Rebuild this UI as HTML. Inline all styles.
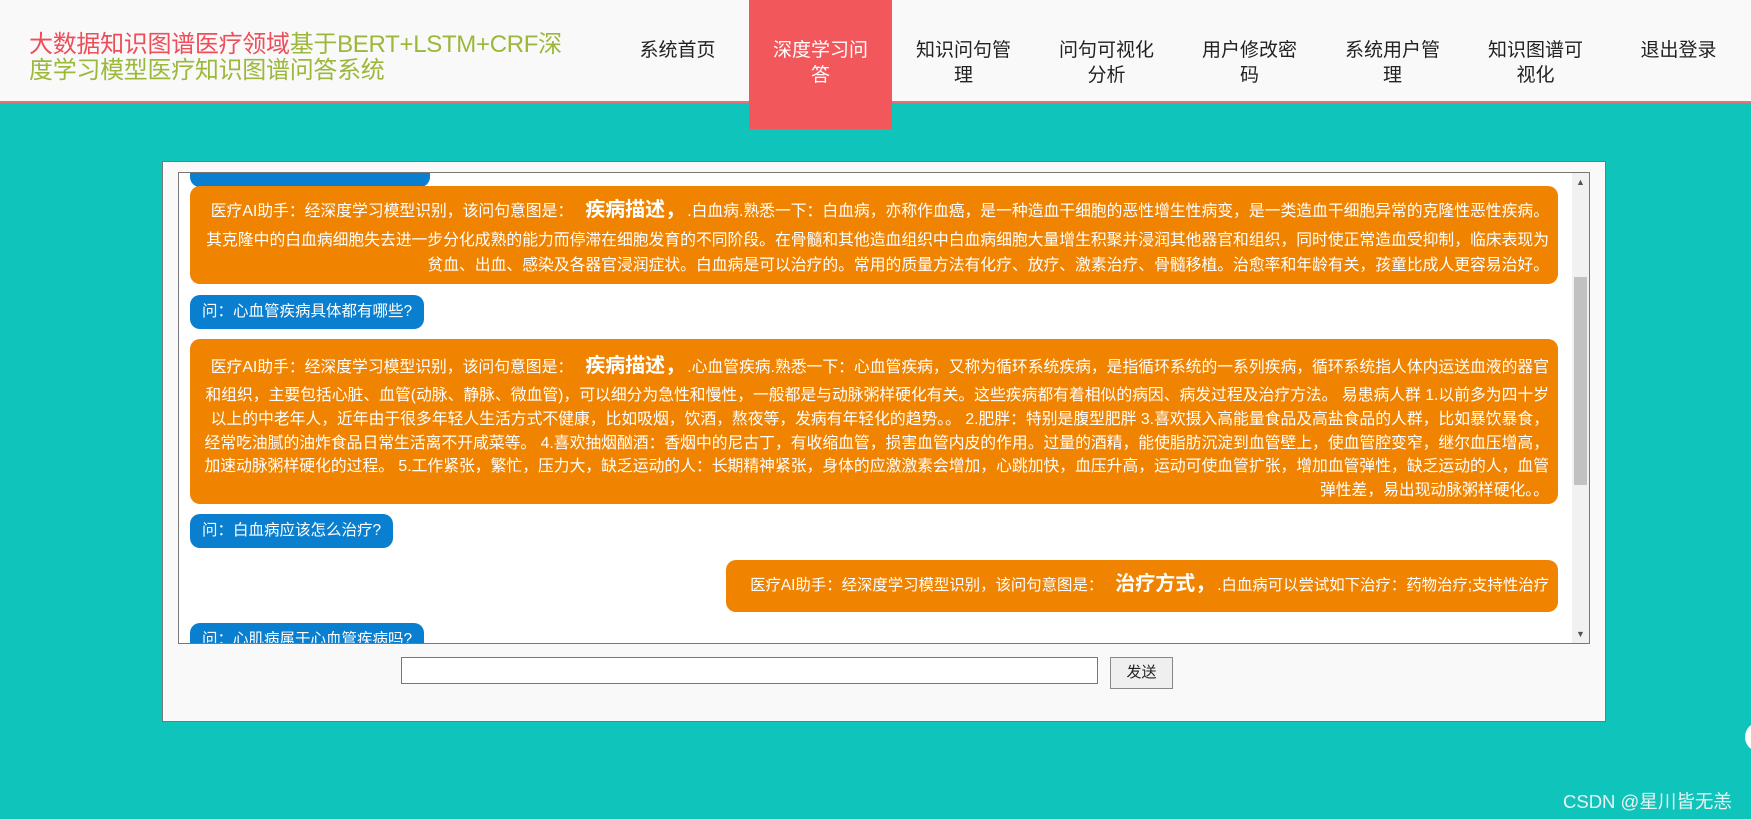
<!DOCTYPE html>
<html><head><meta charset="utf-8">
<style>
*{margin:0;padding:0;box-sizing:border-box}
body{width:1751px;height:819px;overflow:hidden;background:#0fc4bb;font-family:"Liberation Sans","Noto Sans CJK SC",sans-serif;position:relative}
.hdr{position:absolute;left:0;top:0;width:1751px;height:103px;background:#f9f9f9;border-bottom:2px solid #e8707a}
.title{position:absolute;left:29px;top:32px;font-size:24px;line-height:26px;color:#9cb83a;letter-spacing:-0.3px}
.title span{color:#ee4d5a}
.nav{position:absolute;left:606px;top:0;display:flex}
.nav div{width:143px;height:103px;font-size:19px;line-height:25px;color:#222;text-align:center;padding:38px 17px 0}
.nav div.act{background:#f2575b;color:#fff;height:129px}
.box{position:absolute;left:162px;top:161px;width:1444px;height:561px;background:#f9f9f9;border:1px solid #777}
.chat{position:absolute;left:178px;top:172px;width:1412px;height:472px;background:#fff;border:1px solid #777;overflow:hidden}
.sb{position:absolute;right:0;top:0;width:17px;height:100%;background:#f1f1f1}
.th{position:absolute;left:2px;top:104px;width:13px;height:208px;background:#c1c1c1}
.q{position:absolute;left:11px;background:#0a7fcf;color:#fff;font-size:15.5px;line-height:34px;padding:0 12px;border-radius:10px;height:34px}
.a{position:absolute;background:#f08300;color:#fff;font-size:15.8px;text-align:right;border-radius:10px;padding:0 9px;white-space:nowrap}
.a b{font-size:20px;margin:0 2px 0 12px;line-height:36px}
.inp{position:absolute;left:401px;top:657px;width:697px;height:27px;background:#fff;border:1px solid #777}
.btn{position:absolute;left:1110px;top:657px;width:63px;height:32px;background:#efefef;border:1px solid #888;font-size:15px;text-align:center;line-height:30px;color:#222}
.wm{position:absolute;left:1563px;top:788px;font-size:18.5px;color:#e8f4f3}
</style></head><body>
<div class="hdr">
 <div class="title"><span>大数据知识图谱医疗领域</span>基于BERT+LSTM+CRF深<br>度学习模型医疗知识图谱问答系统</div>
 <div class="nav">
  <div>系统首页</div>
  <div class="act">深度学习问答</div>
  <div>知识问句管理</div>
  <div>问句可视化分析</div>
  <div>用户修改密码</div>
  <div>系统用户管理</div>
  <div>知识图谱可视化</div>
  <div>退出登录</div>
 </div>
</div>
<div class="box"></div>
<div class="chat">
 <div class="q" style="top:-20px;width:240px"></div>
 <div class="a" style="left:11px;width:1368px;top:13px;height:98px;line-height:25px;padding-top:6px">医疗AI助手：经深度学习模型识别，该问句意图是：<b>疾病描述，</b>.白血病.熟悉一下：白血病，亦称作血癌，是一种造血干细胞的恶性增生性病变，是一类造血干细胞异常的克隆性恶性疾病。<br>其克隆中的白血病细胞失去进一步分化成熟的能力而停滞在细胞发育的不同阶段。在骨髓和其他造血组织中白血病细胞大量增生积聚并浸润其他器官和组织，同时使正常造血受抑制，临床表现为<br>贫血、出血、感染及各器官浸润症状。白血病是可以治疗的。常用的质量方法有化疗、放疗、激素治疗、骨髓移植。治愈率和年龄有关，孩童比成人更容易治好。</div>
 <div class="q" style="top:122px">问：心血管疾病具体都有哪些?</div>
 <div class="a" style="left:11px;width:1368px;top:166px;height:165px;line-height:23.8px;padding-top:9px">医疗AI助手：经深度学习模型识别，该问句意图是：<b>疾病描述，</b>.心血管疾病.熟悉一下：心血管疾病，又称为循环系统疾病，是指循环系统的一系列疾病，循环系统指人体内运送血液的器官<br>和组织，主要包括心脏、血管(动脉、静脉、微血管)，可以细分为急性和慢性，一般都是与动脉粥样硬化有关。这些疾病都有着相似的病因、病发过程及治疗方法。 易患病人群 1.以前多为四十岁<br>以上的中老年人，近年由于很多年轻人生活方式不健康，比如吸烟，饮酒，熬夜等，发病有年轻化的趋势。。 2.肥胖：特别是腹型肥胖 3.喜欢摄入高能量食品及高盐食品的人群，比如暴饮暴食，<br>经常吃油腻的油炸食品日常生活离不开咸菜等。 4.喜欢抽烟酗酒：香烟中的尼古丁，有收缩血管，损害血管内皮的作用。过量的酒精，能使脂肪沉淀到血管壁上，使血管腔变窄，继尔血压增高，<br>加速动脉粥样硬化的过程。 5.工作紧张，繁忙，压力大，缺乏运动的人：长期精神紧张，身体的应激激素会增加，心跳加快，血压升高，运动可使血管扩张，增加血管弹性，缺乏运动的人，血管<br>弹性差，易出现动脉粥样硬化。。</div>
 <div class="q" style="top:341px">问：白血病应该怎么治疗?</div>
 <div class="a" style="left:547px;width:832px;top:387px;height:52px;line-height:52px;font-size:15.4px">医疗AI助手：经深度学习模型识别，该问句意图是：<b>治疗方式，</b>.白血病可以尝试如下治疗：药物治疗;支持性治疗</div>
 <div class="q" style="top:450px">问：心肌病属于心血管疾病吗?</div>
 <div class="sb"><div class="th"></div><div style="position:absolute;top:4px;left:4px;font-size:9px;color:#555">▲</div><div style="position:absolute;bottom:4px;left:4px;font-size:9px;color:#555">▼</div></div>
</div>
<div class="inp"></div>
<div class="btn">发送</div>
<div style="position:absolute;left:1745px;top:722px;width:30px;height:30px;border-radius:50%;background:#fff"></div>
<div class="wm">CSDN @星川皆无恙</div>
</body></html>
